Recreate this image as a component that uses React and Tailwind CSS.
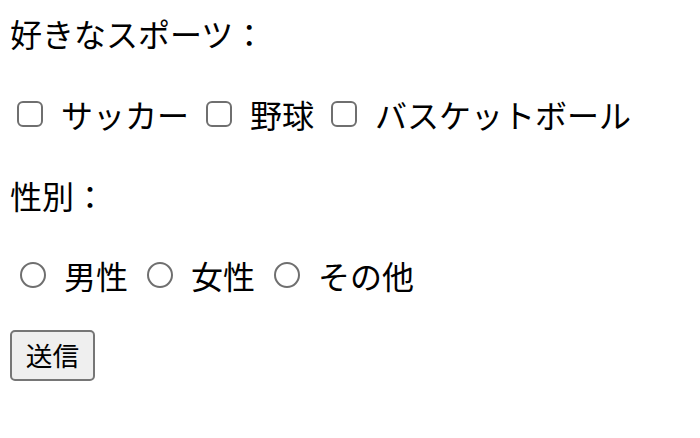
import { useState } from 'react'

const sports = ['サッカー', '野球', 'バスケットボール']
const genders = ['男性', '女性', 'その他']

export default function App() {
  const [checked, setChecked] = useState({})
  const [gender, setGender] = useState('')

  return (
    <form
      className="min-h-screen bg-white pl-[10px] flex flex-col items-start text-[32px] text-black"
      style={{ fontFamily: '"Noto Sans CJK JP", "Noto Sans", sans-serif' }}
      onSubmit={e => e.preventDefault()}
    >
      <p className="mt-[10px] h-[46px] leading-[46px]">好きなスポーツ：</p>

      <div className="mt-[35px] h-[46px] flex items-center gap-[17px] ml-[7px]">
        {sports.map(s => (
          <label key={s} className="flex items-center gap-[18px] leading-[46px]">
            <input
              type="checkbox"
              checked={!!checked[s]}
              onChange={() => setChecked(c => ({ ...c, [s]: !c[s] }))}
              className="appearance-none shrink-0 box-border w-[26px] h-[26px] m-0 border-2 border-[#6f6f6f] rounded-[6px] bg-white checked:bg-[#0075ff] checked:border-[#0075ff]"
            />
            <span>{s}</span>
          </label>
        ))}
      </div>

      <p className="mt-[35px] h-[46px] leading-[46px]">性別：</p>

      <div className="mt-[34px] h-[46px] flex items-center gap-[19px] ml-[10px]">
        {genders.map(g => (
          <label key={g} className="flex items-center gap-[18px] leading-[46px]">
            <input
              type="radio"
              name="gender"
              checked={gender === g}
              onChange={() => setGender(g)}
              className="appearance-none shrink-0 box-border w-[26px] h-[26px] m-0 border-2 border-[#6f6f6f] rounded-full bg-white checked:border-[7px] checked:border-[#0075ff]"
            />
            <span>{g}</span>
          </label>
        ))}
      </div>

      <button
        type="submit"
        className="mt-[32px] w-[85px] h-[51px] flex items-center justify-center bg-[#efefef] border-2 border-[#767676] rounded-[5px] text-[26.67px] leading-none"
      >
        送信
      </button>
    </form>
  )
}
